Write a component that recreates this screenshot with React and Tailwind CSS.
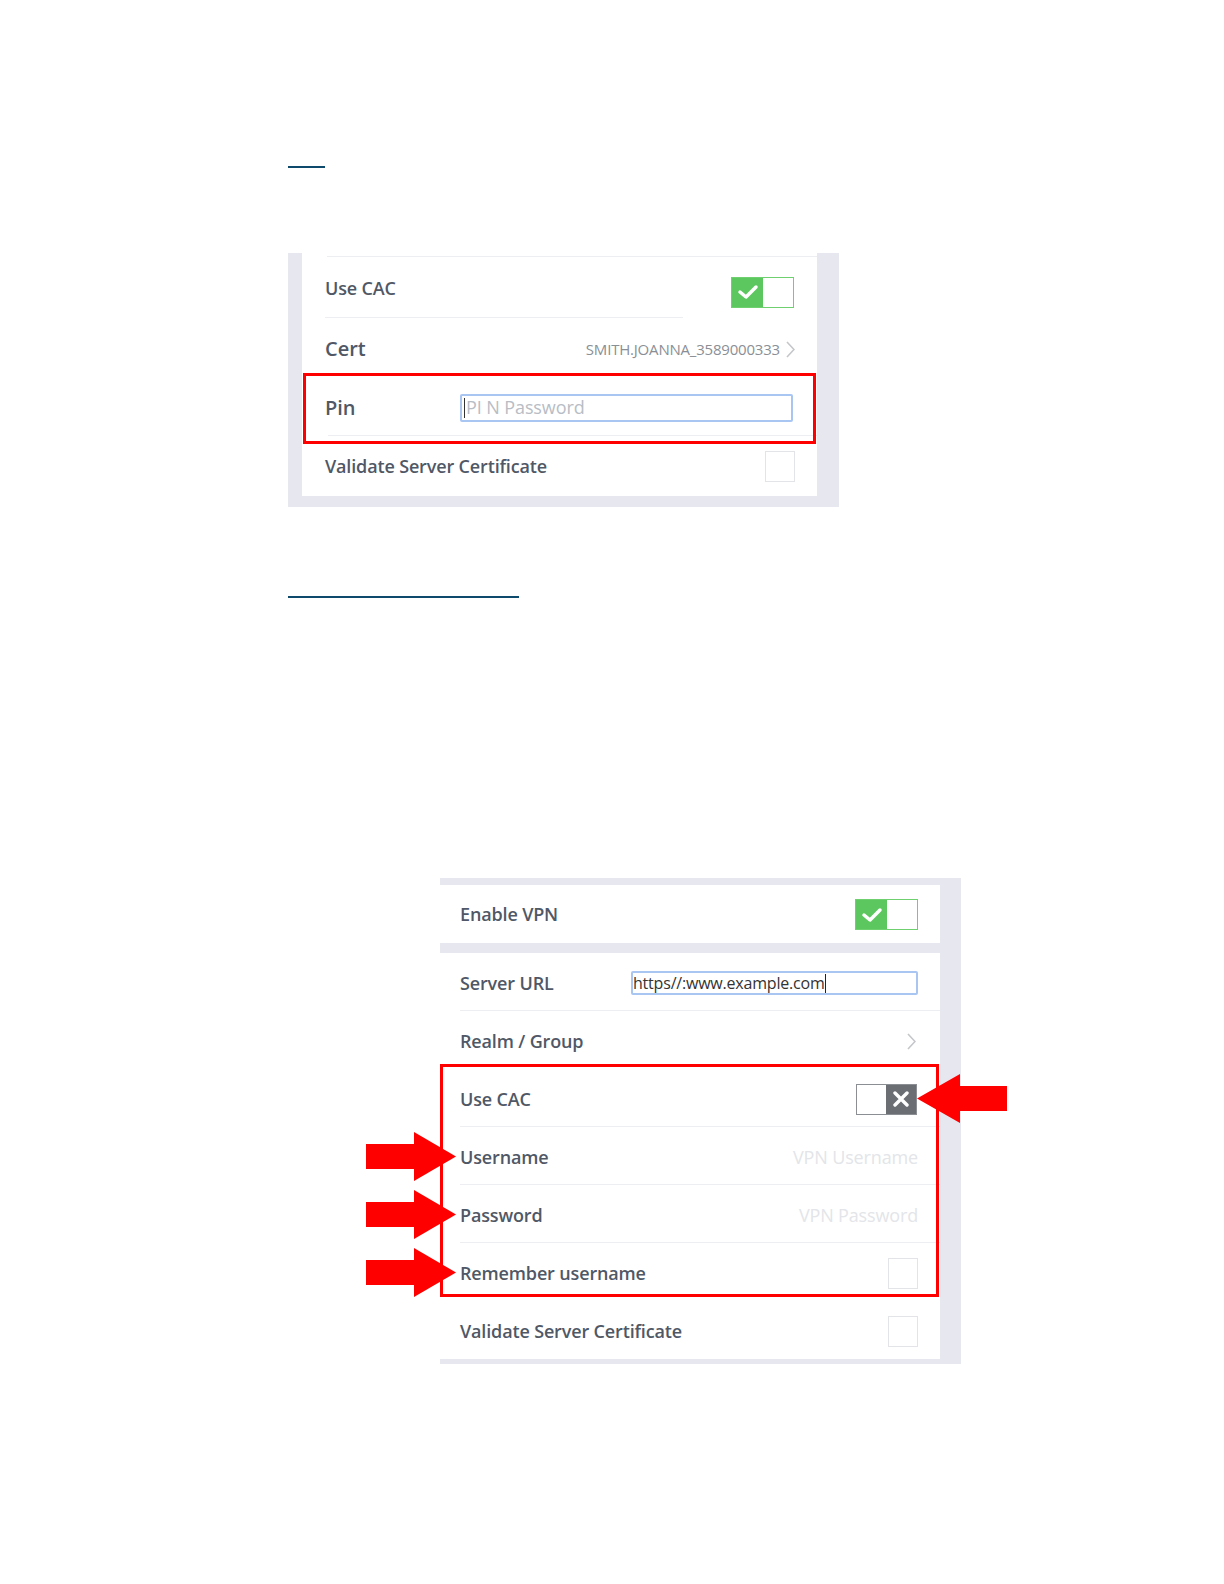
import React from 'react';

const label = "font-['Open_Sans',sans-serif] font-semibold text-[18px] tracking-[-0.15px] text-[#505866]";

function ToggleOn() {
  return (
    <div className="flex w-[63px] h-[31px] border border-[#6fd06f]">
      <div className="w-[31px] h-full bg-[#5dc75f] flex items-center justify-center">
        <svg width="22" height="18" viewBox="0 0 22 18">
          <polyline points="3,9 9,14 19,4" fill="none" stroke="#fff" strokeWidth="3.5" strokeLinecap="round" strokeLinejoin="round" />
        </svg>
      </div>
      <div className="flex-1 bg-white" />
    </div>
  );
}

function ToggleOff() {
  return (
    <div className="flex w-[61px] h-[31px] border border-[#8b8e92]">
      <div className="flex-1 bg-white" />
      <div className="w-[30px] h-full bg-[#6b6e73] flex items-center justify-center">
        <svg width="16" height="16" viewBox="0 0 16 16">
          <path d="M2 2 L14 14 M14 2 L2 14" stroke="#fff" strokeWidth="3.4" strokeLinecap="round" />
        </svg>
      </div>
    </div>
  );
}

function Checkbox() {
  return <div className="w-[30px] h-[31px] border border-[#e2e4e8] bg-white" />;
}

function Chevron() {
  return (
    <svg width="9" height="17" viewBox="0 0 9 17">
      <polyline points="1,1 8,8.5 1,16" fill="none" stroke="#c4c6c9" strokeWidth="1.6" />
    </svg>
  );
}

function ArrowLeft({ className }) {
  return (
    <svg className={className} width="90" height="49" viewBox="0 0 90 49">
      <polygon points="0,24.5 43,0 43,12 90,12 90,37 43,37 43,49" fill="#ff0000" />
    </svg>
  );
}

function ArrowRight({ className }) {
  return (
    <svg className={className} width="90" height="49" viewBox="0 0 90 49">
      <polygon points="0,12 48,12 48,0 90,24.5 48,49 48,37 0,37" fill="#ff0000" />
    </svg>
  );
}

function Row({ children, sep = true, className = '' }) {
  return (
    <div className={`ml-[20px] h-[58px] pt-[3px] flex items-center justify-between pr-[22px] ${sep ? 'border-b border-[#eceef1]' : ''} ${className}`}>
      {children}
    </div>
  );
}

export default function App() {
  return (
    <div className="w-[1224px] min-h-[1584px] bg-white pl-[288px] pt-[166px]">
      <div className="w-[37px] h-[2px] bg-[#0d4a6c]" />

      {/* CAC panel */}
      <div className="mt-[85px] w-[551px] bg-[#e7e8ef] pl-[14px] pr-[22px] pb-[11px]">
        <div className="relative bg-white h-[243px] pt-[3px]">
          <div className="ml-[25px] h-px bg-[#eceef1]" />
          <div className="h-[60px] pt-[2px] flex items-center justify-between pl-[23px] pr-[23px]">
            <span className={label}>Use CAC</span>
            <div className="mt-[8px]"><ToggleOn /></div>
          </div>
          <div className="ml-[23px] w-[358px] h-px bg-[#eceef1]" />
          <div className="h-[60px] pt-[2px] flex items-center justify-between pl-[23px] pr-[22px]">
            <span className="font-['Open_Sans',sans-serif] font-semibold text-[20px] text-[#505866]">Cert</span>
            <div className="flex items-center gap-[6px]">
              <span className="font-['Open_Sans',sans-serif] text-[15px] tracking-[-0.2px] text-[#8a8f96]">SMITH.JOANNA_3589000333</span>
              <Chevron />
            </div>
          </div>
          <div className="h-[57px] pt-[2px] flex items-center pl-[23px] pr-[24px]">
            <span className="w-[135px] font-['Open_Sans',sans-serif] font-semibold text-[20px] text-[#505866]">Pin</span>
            <div className="flex-1 h-[28px] border-2 border-[#a9c5f2] rounded-[2px] flex items-center pl-[2px]">
              <span className="w-px h-[20px] bg-[#333]" />
              <span className="ml-[1px] font-['Open_Sans',sans-serif] text-[18px] tracking-[-0.1px] text-[#b8bdc5]">PI N Password</span>
            </div>
          </div>
          <div className="ml-[26px] h-px bg-[#eceef1]" />
          <div className="h-[58px] pt-[3px] flex items-center justify-between pl-[23px] pr-[22px]">
            <span className={label}>Validate Server Certificate</span>
            <Checkbox />
          </div>

          <div className="absolute left-px top-[120px] w-[513px] h-[71px] border-[3px] border-[#ff0000]" />
        </div>
      </div>

      <div className="mt-[89px] w-[231px] h-[2px] bg-[#0d4a6c]" />

      {/* VPN panel */}
      <div className="relative mt-[280px] ml-[152px] w-[521px] bg-[#e7e8ef] pt-[7px] pb-[5px] pr-[21px]">
        <div className="bg-white h-[58px] flex items-center justify-between pl-[20px] pr-[22px]">
          <span className={label}>Enable VPN</span>
          <div className="mt-[1px]"><ToggleOn /></div>
        </div>

        <div className="mt-[10px] bg-white">
          <Row>
            <div className="flex items-center w-full">
              <span className={`${label} w-[171px]`}>Server URL</span>
              <div className="flex-1 h-[24px] border-2 border-[#a9c5f2] rounded-[2px] flex items-center">
                <span className="font-['Open_Sans',sans-serif] text-[16px] tracking-[-0.2px] text-[#333] leading-none">https//:www.example.com</span>
                <span className="w-px h-[19px] bg-[#222]" />
              </div>
            </div>
          </Row>
          <Row sep={false}>
            <span className={label}>Realm / Group</span>
            <div className="mr-[2px]"><Chevron /></div>
          </Row>
          <Row>
            <span className={label}>Use CAC</span>
            <div className="mr-[1px]"><ToggleOff /></div>
          </Row>
          <Row>
            <span className={label}>Username</span>
            <span className={`${label} !font-normal text-[#e3e5e9]`}>VPN Username</span>
          </Row>
          <Row>
            <span className={label}>Password</span>
            <span className={`${label} !font-normal text-[#e3e5e9]`}>VPN Password</span>
          </Row>
          <Row sep={false}>
            <span className={label}>Remember username</span>
            <Checkbox />
          </Row>
          <Row sep={false} className="h-[57px]">
            <span className={label}>Validate Server Certificate</span>
            <Checkbox />
          </Row>
        </div>

        <div className="absolute left-0 top-[186px] w-[499px] h-[233px] border-[3px] border-[#ff0000]" />

        <ArrowLeft className="absolute left-[477px] top-[196px]" />
        <ArrowRight className="absolute left-[-74px] top-[254px]" />
        <ArrowRight className="absolute left-[-74px] top-[312px]" />
        <ArrowRight className="absolute left-[-74px] top-[370px]" />
      </div>
    </div>
  );
}
